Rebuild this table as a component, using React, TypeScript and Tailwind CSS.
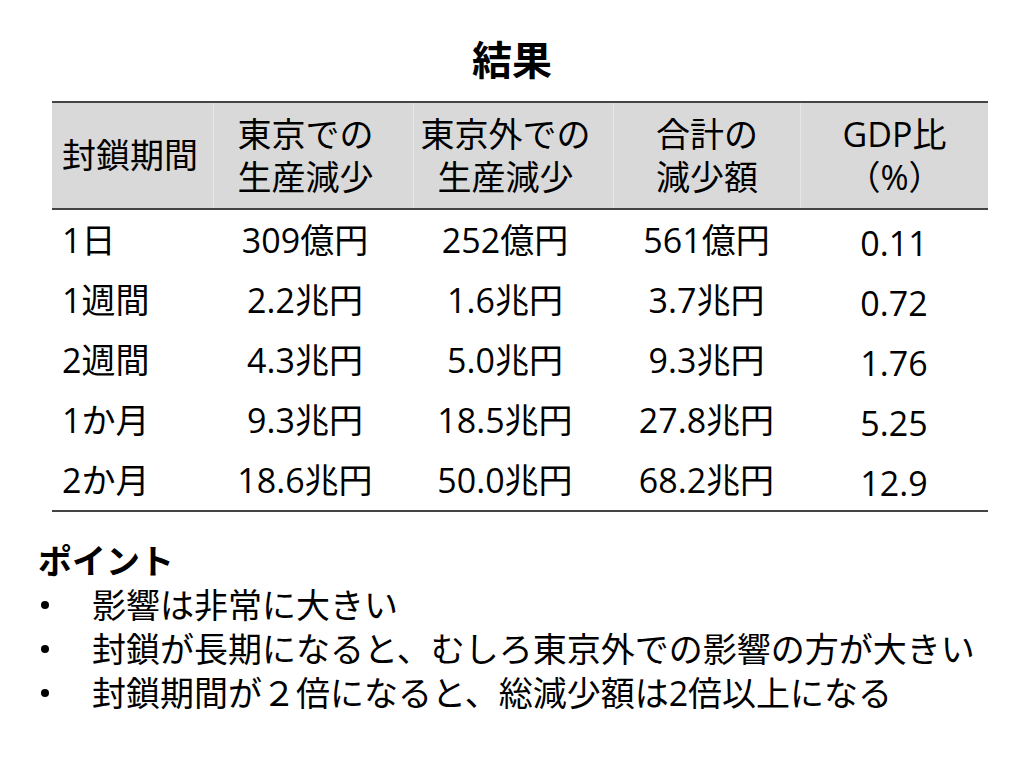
const font = { fontFamily: '"Open Sans", "Noto Sans CJK JP", sans-serif' };

const header = [
  ["封鎖期間"],
  ["東京での", "生産減少"],
  ["東京外での", "生産減少"],
  ["合計の", "減少額"],
  ["GDP比", "（%）"],
];

const rows = [
  ["1日", "309億円", "252億円", "561億円", "0.11"],
  ["1週間", "2.2兆円", "1.6兆円", "3.7兆円", "0.72"],
  ["2週間", "4.3兆円", "5.0兆円", "9.3兆円", "1.76"],
  ["1か月", "9.3兆円", "18.5兆円", "27.8兆円", "5.25"],
  ["2か月", "18.6兆円", "50.0兆円", "68.2兆円", "12.9"],
];

const points = [
  "影響は非常に大きい",
  "封鎖が長期になると、むしろ東京外での影響の方が大きい",
  "封鎖期間が２倍になると、総減少額は2倍以上になる",
];

const cols = "grid grid-cols-[161px_200px_200px_187px_188px]";

// columns 2 and 3 sit a little left of their cell centre in the slide
const cellPad = ["pl-[10px]", "pr-[16px]", "pr-[16px]", "", ""];

export default function App() {
  return (
    <div className="w-[1024px] h-[768px] bg-white text-black overflow-hidden" style={font}>
      <h1 className="pt-[36px] text-center text-[40px] leading-[48px] font-bold">結果</h1>

      <div className="mx-[52px] mt-[17px] w-[936px] border-t-2 border-b-2 border-[#444444]">
        <div className={`${cols} h-[107px] bg-[#d9d9d9] border-b-2 border-[#444444]`}>
          {header.map((lines, i) => (
            <div
              key={i}
              className={`flex flex-col justify-center text-[34px] leading-[43px] ${cellPad[i]} ${
                i === 0 ? "items-start" : "items-center border-l border-[#e6e6e6]"
              }`}
            >
              {lines.map((l, j) => (
                <span key={j}>{l}</span>
              ))}
            </div>
          ))}
        </div>

        {rows.map((row, r) => (
          <div key={r} className={`${cols} h-[60px]`}>
            {row.map((cell, i) => (
              <div
                key={i}
                className={`flex items-center text-[34px] leading-[43px] ${cellPad[i]} ${
                  i === 0 ? "" : "justify-center"
                } ${i === 4 ? "pt-[6px]" : ""}`}
              >
                {cell}
              </div>
            ))}
          </div>
        ))}
      </div>

      <div className="mt-[27px] pl-[38px]">
        <div className="text-[34px] leading-[44px] font-bold">ポイント</div>
        {points.map((p, i) => (
          <div key={i} className="flex items-center text-[34px] leading-[44px]">
            <span className="w-[54px] flex pl-[3px]">
              <span className="w-[8px] h-[8px] rounded-full bg-black" />
            </span>
            <span>{p}</span>
          </div>
        ))}
      </div>
    </div>
  );
}
